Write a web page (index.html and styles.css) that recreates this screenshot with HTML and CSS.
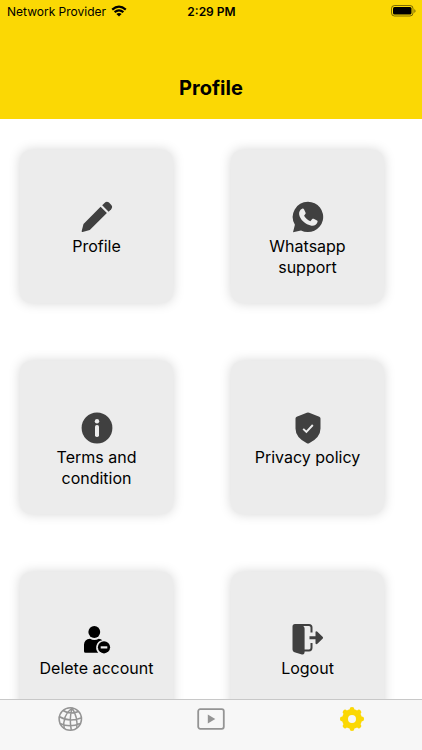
FILE: index.html
```html
<!DOCTYPE html>
<html lang="en">
<head>
<meta charset="utf-8">
<meta name="viewport" content="width=device-width, initial-scale=1">
<title>Profile</title>
<link rel="stylesheet" href="styles.css">
</head>
<body>
<header class="header">
  <div class="status">
    <div class="carrier">
      <span>Network Provider</span>
      <svg class="wifi" viewBox="0 0 16 12" aria-hidden="true">
        <path d="M1.2 4.6Q8 -1.2 14.8 4.6M3.6 7.2Q8 3.6 12.4 7.2" fill="none" stroke="currentColor" stroke-width="2.200"/>
        <path d="M5.4 8.9Q8 7 10.6 8.9L8 11.6Z"/>
      </svg>
    </div>
    <time class="clock">2:29 PM</time>
    <svg class="battery" viewBox="0 0 25 12" aria-hidden="true">
      <rect x=".5" y=".5" width="21.500" height="10.500" rx="3" fill="none" stroke="currentColor" stroke-opacity=".5"/>
      <rect x="2" y="2" width="18.500" height="7.500" rx="1.500"/>
      <path d="M23.300 4v4q1.300-.8 1.300-2t-1.300-2Z" fill-opacity=".5"/>
    </svg>
  </div>
  <h1 class="title">Profile</h1>
</header>

<main class="content">
  <div class="grid">
    <a class="card" href="#profile">
      <svg class="icon" viewBox="0 0 32 32" aria-hidden="true">
        <path d="M19.600 5.800 25.900 12.100 8.800 28.900 1.600 31Q.4 31.300.7 30.100L2.500 22.900Z"/>
        <path d="M21.200 4.300 23.500 2Q25.700-.2 28 1.600L30.300 3.900Q32 6 30.200 8.200L27.600 10.700Z"/>
      </svg>
      <span>Profile</span>
    </a>
    <a class="card" href="#support">
      <svg class="icon" viewBox="0 0 32 32" aria-hidden="true">
        <path d="M16 .7a15.200 15.200 0 1 1-7 28.700L1 31.200 2.900 23.700A15.200 15.200 0 0 1 16 .7Z"/>
        <path class="cut" d="M10.200 7.700c.9-.3 1.500 0 1.900.8l1.500 3.300c.3.700 0 1.300-1.500 2.900 1.500 2.600 3.500 4.400 6.300 5.500l1.800-2.100c.4-.5.900-.6 1.500-.3l3.300 1.700c.6.300.7.8.5 1.600-.6 2.600-3.300 4-6 3.600-6-1-11.700-6.200-12.400-11.400-.3-2.300 1-4.900 3.100-5.600Z"/>
      </svg>
      <span>Whatsapp support</span>
    </a>
    <a class="card" href="#terms">
      <svg class="icon" viewBox="0 0 32 32" aria-hidden="true">
        <circle cx="16" cy="16" r="15.400"/>
        <circle class="cut" cx="16" cy="9.300" r="2.200"/>
        <rect class="cut" x="14" y="13" width="4" height="12" rx="1.800"/>
      </svg>
      <span>Terms and condition</span>
    </a>
    <a class="card" href="#privacy">
      <svg class="icon" viewBox="0 0 32 32" aria-hidden="true">
        <path d="M14.800.8Q16 .2 17.200.8L27.300 4.800Q28.500 5.300 28.500 6.600V16.500Q28.500 25.500 17.100 31.300 16 31.900 14.900 31.300 3.500 25.500 3.500 16.500V6.600Q3.500 5.300 4.700 4.800Z"/>
        <path d="M11.200 16.800 14.400 20 20.800 13" fill="none" stroke="#ececec" stroke-width="1.900"/>
      </svg>
      <span>Privacy policy</span>
    </a>
    <a class="card" href="#delete">
      <svg class="icon solid" viewBox="0 0 32 32" aria-hidden="true">
        <circle cx="13.300" cy="9" r="5.900"/>
        <path d="M9 15.700Q13.300 18.300 17.800 15.700 20 15.900 21.300 17.300A7.400 7.400 0 0 0 17.200 29.700H4.500Q3 29.700 3 28.200V21.500Q3.300 16.200 9 15.700Z"/>
        <circle cx="23" cy="24.300" r="6.100"/>
        <path class="cut" d="M19.700 23.300H26.300V25.500H19.700Z"/>
      </svg>
      <span>Delete account</span>
    </a>
    <a class="card" href="#logout">
      <svg class="icon" viewBox="0 0 32 32" aria-hidden="true">
        <path d="M3 1H8L11 2.800Q12.600 3.700 12.600 5.500V29.300Q12.400 32 9.900 31.500L2.500 29.200Q.5 28.500.5 26.500V3.500Q.5 1 3 1Z"/>
        <path d="M4 2H17Q19.500 2 19.500 4.500V9.500M19.500 20V24.800Q19.500 27.500 17 27.500H12" fill="none" stroke="currentColor" stroke-width="2"/>
        <path d="M17.500 13.300H23.500V8.800Q24.300 7.800 25.400 8.700L30.800 14Q31.400 14.700 30.800 15.400L25.400 20.800Q24.300 21.600 23.500 20.500V16.200H17.500Z"/>
      </svg>
      <span>Logout</span>
    </a>
  </div>
</main>

<nav class="tabs" aria-label="Main">
  <a class="tab" href="#world" aria-label="World">
    <svg class="tab-icon" viewBox="0 0 28 28" aria-hidden="true">
      <g fill="none" stroke="currentColor" stroke-width="1.500">
        <circle cx="14.300" cy="14" r="11.200"/>
        <path d="M16 3Q6 11 8.200 23.500M16 3Q13 14 15.300 25M16 3Q22 12 20.800 22.800M7 5.500Q14 10 22.500 6.500M3 11.500Q13 17.500 25 13M4 18.500Q14 23 24 18.500"/>
      </g>
    </svg>
  </a>
  <a class="tab" href="#videos" aria-label="Videos">
    <svg class="tab-icon" viewBox="0 0 28 28" aria-hidden="true">
      <rect x="1.200" y="4.200" width="25.600" height="19.600" rx="2" fill="none" stroke="currentColor" stroke-width="1.800"/>
      <path d="M10.800 9.500V18.500L18.300 14Z"/>
    </svg>
  </a>
  <a class="tab active" href="#settings" aria-label="Settings" aria-current="page">
    <svg class="tab-icon" viewBox="0 0 28 28" aria-hidden="true">
      <circle cx="14" cy="14" r="7" fill="none" stroke="currentColor" stroke-width="6"/>
      <g stroke="currentColor" stroke-width="4.800" stroke-linecap="round">
        <path d="M14 4.300V6M14 22V23.700M4.300 14H6M22 14H23.700M7.100 7.100 8 8M20 20 20.900 20.900M7.100 20.900 8 20M20 8 20.900 7.100"/>
      </g>
    </svg>
  </a>
</nav>
</body>
</html>
```
FILE: styles.css
```css
* {
  box-sizing: border-box;
}

body {
  margin: 0;
  height: 100vh;
  display: flex;
  flex-direction: column;
  background: #fff;
  color: #000;
  font-family: Inter, "Liberation Sans", sans-serif;
}

a {
  color: inherit;
  text-decoration: none;
}

svg {
  display: block;
  fill: currentColor;
}

.header {
  flex: none;
  padding-bottom: 19px;
  background: #fbd804;
}

.status {
  display: grid;
  grid-template-columns: 1fr auto 1fr;
  align-items: center;
  height: 22px;
  padding: 0 6px 0 7px;
  font-size: 12px;
}

.carrier {
  display: flex;
  align-items: center;
  gap: 5px;
}

.wifi {
  width: 16px;
  height: 12px;
}

.clock {
  font-weight: 600;
}

.battery {
  width: 25px;
  height: 12px;
  justify-self: end;
}

.title {
  margin: 54px 0 0;
  font-size: 20px;
  line-height: 24px;
  font-weight: 700;
  text-align: center;
}

.content {
  flex: 1;
  min-height: 0;
  overflow: hidden;
}

.grid {
  display: grid;
  grid-template-columns: 1fr 1fr;
  gap: 58px;
  padding: 31px 38px 31px 20px;
}

.card {
  display: flex;
  flex-direction: column;
  align-items: center;
  gap: 3px;
  aspect-ratio: 1;
  padding: 51px 16px 0;
  border-radius: 11px;
  background: #ececec;
  box-shadow: 0 0 12px rgba(0, 0, 0, 0.17);
  font-size: 16px;
  line-height: 21px;
  text-align: center;
}

.icon {
  width: 32px;
  height: 32px;
  color: #404040;
}

.solid {
  color: #000;
}

.cut {
  fill: #ececec;
}

.tabs {
  flex: none;
  display: grid;
  grid-template-columns: repeat(3, 1fr);
  height: 51px;
  border-top: 1px solid #c8c8c8;
  background: #f7f7f7;
  color: #949494;
}

.tab {
  display: flex;
  justify-content: center;
  padding-top: 5px;
}

.tab-icon {
  width: 28px;
  height: 28px;
}

.active {
  color: #fbd804;
}
```
